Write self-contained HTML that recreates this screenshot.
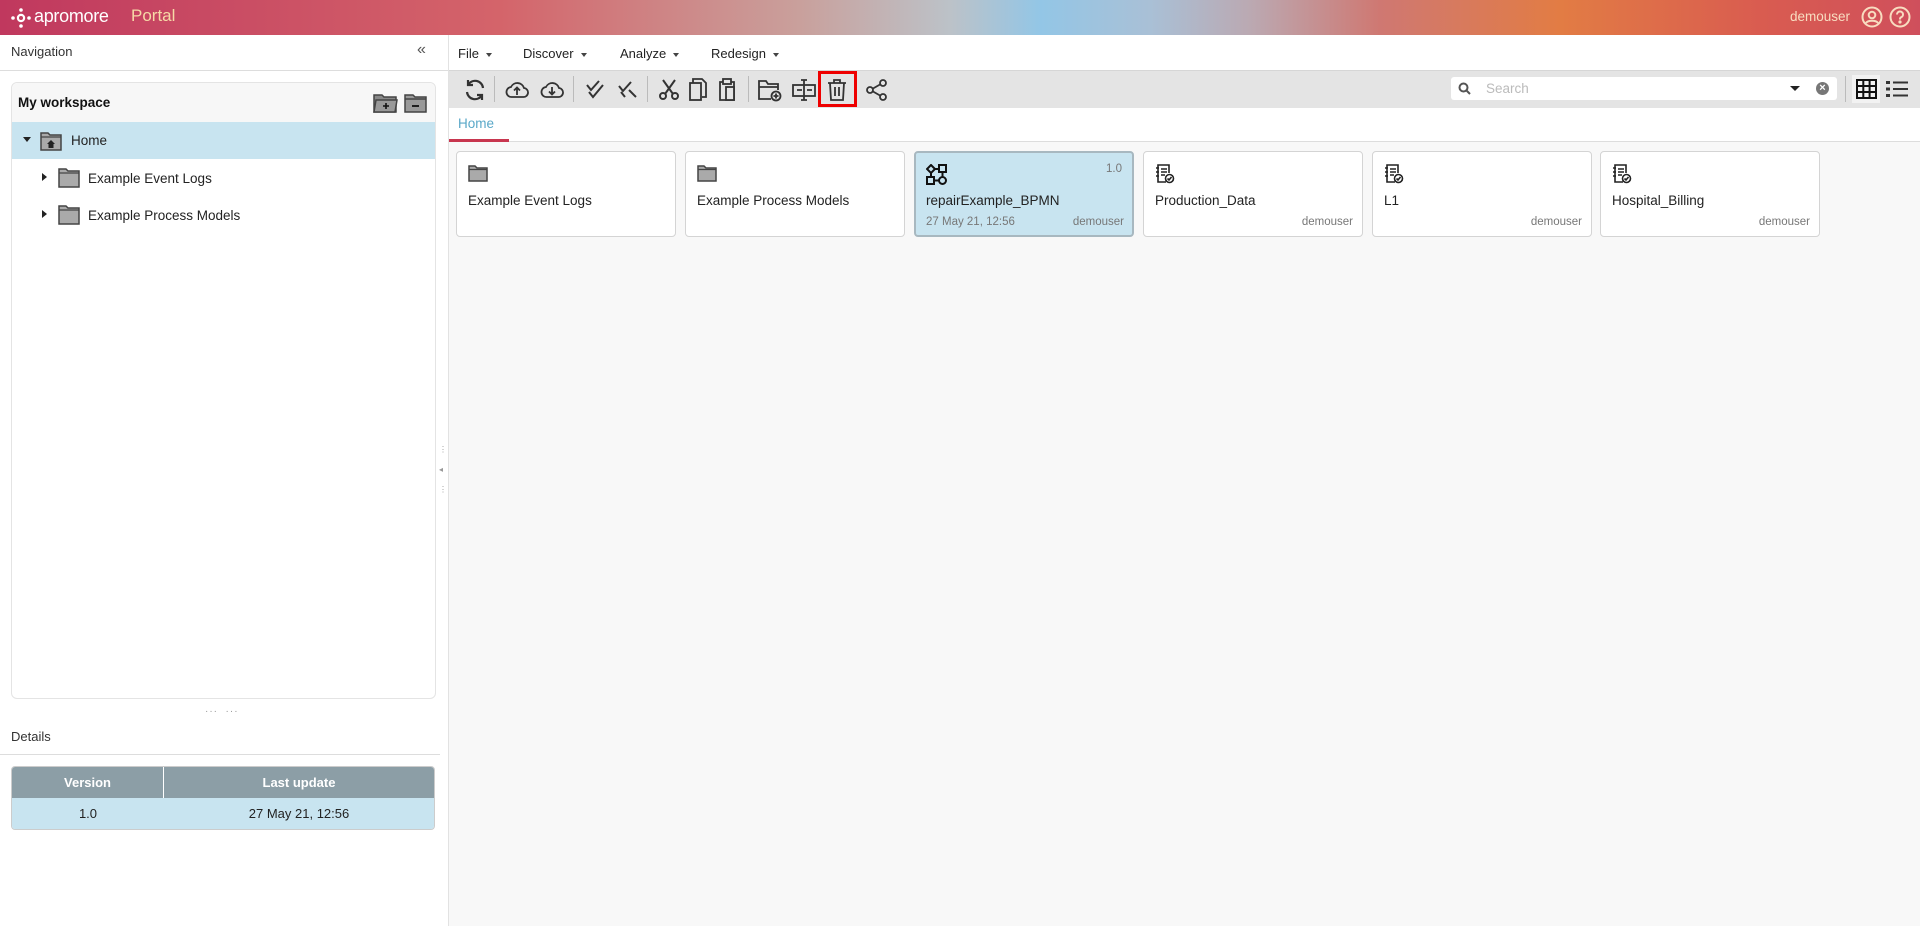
<!DOCTYPE html>
<html><head><meta charset="utf-8"><style>
*{box-sizing:border-box;margin:0;padding:0}
body{width:1920px;height:926px;overflow:hidden;font-family:"Liberation Sans",sans-serif;font-size:13px;color:#222;background:#fff;position:relative}
.abs{position:absolute}
#hdr{left:0;top:0;width:1920px;height:35px;background:linear-gradient(90deg,#c0385e 0,#d4646a 500px,#c9a09c 800px,#bcc2c8 950px,#93c6e6 1040px,#a9c0d6 1150px,#bba9b2 1250px,#cf7872 1380px,#e27c44 1560px,#d95c50 1760px,#cf4f5c 1920px)}
.card{position:absolute;top:151px;width:220px;height:86px;background:#fff;border:1px solid #d4d4d4;border-radius:4px}
.card .t{position:absolute;left:11px;top:41px;font-size:13.5px;color:#222}
.card .u{position:absolute;right:9px;top:64px;font-size:11.5px;color:#777}
.card .ic{position:absolute;left:11px;top:12px}
.tb{position:absolute;top:78px}
.sep{position:absolute;top:76px;width:1px;height:26px;background:#bbb}
.menu{position:absolute;top:46px;font-size:13px;color:#222}
.menu:after{content:"";display:inline-block;margin-left:7px;vertical-align:middle;border:3.5px solid transparent;border-top:4px solid #444;border-bottom:0}
</style></head><body>
<div id="hdr" class="abs"></div>
<svg class="abs" style="left:11px;top:8px" width="20" height="20" viewBox="0 0 20 20"><g fill="#fff"><circle cx="10" cy="10" r="4.2"/><circle cx="10" cy="2" r="1.8"/><circle cx="10" cy="18" r="1.8"/><circle cx="2" cy="10" r="1.8"/><circle cx="18" cy="10" r="1.8"/></g><circle cx="10" cy="10" r="2" fill="#c33d5e"/></svg>
<div class="abs" style="left:34px;top:6px;color:#fff;font-size:18px;letter-spacing:-.3px">apromore</div>
<div class="abs" style="left:131px;top:6px;color:#f6d9a6;font-size:17px">Portal</div>
<div class="abs" style="left:1790px;top:9px;color:#f8dcc0;font-size:13.5px">demouser</div>
<svg class="abs" style="left:1861px;top:6px" width="22" height="22" viewBox="0 0 22 22" fill="none" stroke="#f8dcc0" stroke-width="2"><circle cx="11" cy="11" r="9.5"/><circle cx="11" cy="9" r="3.3"/><path d="M5 17c2-3 10-3 12 0"/></svg>
<svg class="abs" style="left:1889px;top:6px" width="22" height="22" viewBox="0 0 22 22" fill="none" stroke="#f8dcc0" stroke-width="2"><circle cx="11" cy="11" r="9.5"/><path d="M8 8.5a3 3 0 1 1 4 2.8c-1 .4-1 1-1 2.2"/><circle cx="11" cy="16" r=".6" fill="#f8dcc0"/></svg>

<div class="abs" style="left:11px;top:44px;font-size:13px;color:#333">Navigation</div>
<div class="abs" style="left:417px;top:41px;font-size:16px;color:#555">«</div>
<div class="abs" style="left:0;top:70px;width:448px;height:1px;background:#ddd"></div>
<div class="abs" style="left:11px;top:82px;width:425px;height:617px;border:1px solid #e4e4e4;border-radius:6px;background:#fff"></div>
<div class="abs" style="left:12px;top:83px;width:423px;height:39px;background:#f7f7f7;border-radius:6px 6px 0 0"></div>
<div class="abs" style="left:18px;top:95px;font-weight:bold;font-size:13.5px;color:#111">My workspace</div>
<svg class="abs" style="left:373px;top:92px" width="26" height="22" viewBox="0 0 26 22"><path d="M1 3h8l2 2h12v15H1z" fill="#888" stroke="#444" stroke-width="1.5"/><path d="M3 8h21l-2 12H1z" fill="#999" stroke="#444" stroke-width="1.5"/><path d="M13 11v6M10 14h6" stroke="#111" stroke-width="1.6"/></svg>
<svg class="abs" style="left:404px;top:92px" width="23" height="22" viewBox="0 0 23 22"><path d="M1 3h8l2 2h11v15H1z" fill="#999" stroke="#444" stroke-width="1.5"/><path d="M1 7h21" stroke="#444" stroke-width="1.5"/><path d="M8 14h7" stroke="#111" stroke-width="1.8"/></svg>
<div class="abs" style="left:12px;top:122px;width:423px;height:37px;background:#c8e4f0"></div>
<div class="abs" style="left:23px;top:137px;border:4px solid transparent;border-top:5px solid #222;border-bottom:0"></div>
<svg class="abs" style="left:40px;top:131px" width="22" height="20" viewBox="0 0 22 20"><path d="M1 2h7l2 2h11v15H1z" fill="#aaa" stroke="#444" stroke-width="1.5"/><path d="M1 6h20" stroke="#444" stroke-width="1.2"/><path d="M7 13l4-4 4 4h-1.5v4h-5v-4z" fill="#222"/></svg>
<div class="abs" style="left:71px;top:133px;font-size:13.5px;color:#222">Home</div>
<div class="abs" style="left:42px;top:173px;border:4px solid transparent;border-left:5px solid #222;border-right:0"></div>
<svg class="abs" style="left:58px;top:167px" width="22" height="22" viewBox="0 0 22 22"><path d="M1 2h7l2 2h11v16H1z" fill="#aaa" stroke="#444" stroke-width="1.5"/><path d="M1 6h20" stroke="#444" stroke-width="1.2"/></svg>
<div class="abs" style="left:88px;top:171px;font-size:13.5px;color:#222">Example Event Logs</div>
<div class="abs" style="left:42px;top:210px;border:4px solid transparent;border-left:5px solid #222;border-right:0"></div>
<svg class="abs" style="left:58px;top:204px" width="22" height="22" viewBox="0 0 22 22"><path d="M1 2h7l2 2h11v16H1z" fill="#aaa" stroke="#444" stroke-width="1.5"/><path d="M1 6h20" stroke="#444" stroke-width="1.2"/></svg>
<div class="abs" style="left:88px;top:208px;font-size:13.5px;color:#222">Example Process Models</div>
<div class="abs" style="left:205px;top:706px;font-size:10px;color:#999;letter-spacing:1px">···&nbsp;&nbsp;···</div>
<div class="abs" style="left:11px;top:729px;font-size:13px;color:#333">Details</div>
<div class="abs" style="left:0;top:754px;width:440px;height:1px;background:#ddd"></div>
<div class="abs" style="left:11px;top:766px;width:424px;height:64px;border:1px solid #ccc;border-radius:4px;overflow:hidden">
 <div style="height:31px;background:#8c9ea6;color:#fff;font-weight:bold;font-size:13px;display:flex;line-height:31px;text-align:center"><div style="width:152px;border-right:1px solid #fff">Version</div><div style="flex:1">Last update</div></div>
 <div style="height:32px;background:#c8e4f0;display:flex;line-height:32px;text-align:center;font-size:13px"><div style="width:152px">1.0</div><div style="flex:1">27 May 21, 12:56</div></div>
</div>
<div class="abs" style="left:448px;top:35px;width:1px;height:891px;background:#e2e2e2"></div>
<div class="abs" style="left:439px;top:445px;font-size:8px;color:#999;line-height:10px">⋮<br><br>◂<br><br>⋮</div>

<div class="menu" style="left:458px">File</div>
<div class="menu" style="left:523px">Discover</div>
<div class="menu" style="left:620px">Analyze</div>
<div class="menu" style="left:711px">Redesign</div>
<div class="abs" style="left:449px;top:70px;width:1471px;height:38px;background:#e4e4e4;border-top:1px solid #d6d6d6"></div>
<svg class="tb" style="left:463px" width="24" height="24" viewBox="0 0 24 24" fill="none" stroke="#333" stroke-width="2.2"><path d="M20 10A8 8 0 0 0 5 7M4 14a8 8 0 0 0 15 3"/><path d="M5 2v5h5M19 22v-5h-5"/></svg>
<div class="sep" style="left:494px"></div>
<svg class="tb" style="left:505px" width="24" height="24" viewBox="0 0 24 24" fill="none" stroke="#333" stroke-width="1.8"><path d="M7 19a5 5 0 0 1-1-10 7 7 0 0 1 13 1 4.5 4.5 0 0 1-1 9z"/><path d="M12 17v-7M9 12.5l3-3 3 3"/></svg>
<svg class="tb" style="left:540px" width="24" height="24" viewBox="0 0 24 24" fill="none" stroke="#333" stroke-width="1.8"><path d="M7 19a5 5 0 0 1-1-10 7 7 0 0 1 13 1 4.5 4.5 0 0 1-1 9z"/><path d="M12 9v7M9 13.5l3 3 3-3"/></svg>
<div class="sep" style="left:573px"></div>
<svg class="tb" style="left:584px" width="24" height="24" viewBox="0 0 24 24" fill="none" stroke="#333" stroke-width="2"><path d="M3 7l4 5 8-9M5 14l4 5 10-12"/></svg>
<svg class="tb" style="left:616px" width="24" height="24" viewBox="0 0 24 24" fill="none" stroke="#333" stroke-width="2"><path d="M3 8l4 5 8-9M5 14l4 5M13 12l7 7"/></svg>
<div class="sep" style="left:647px"></div>
<svg class="tb" style="left:658px" width="22" height="24" viewBox="0 0 22 24" fill="none" stroke="#333" stroke-width="2"><circle cx="5" cy="18" r="3"/><circle cx="17" cy="18" r="3"/><path d="M7 16L17 2M15 16L5 2"/></svg>
<svg class="tb" style="left:687px" width="22" height="24" viewBox="0 0 22 24" fill="none" stroke="#333" stroke-width="1.8"><path d="M6 5V1h9l4 4v14h-4"/><rect x="3" y="5" width="11" height="17"/></svg>
<svg class="tb" style="left:716px" width="22" height="24" viewBox="0 0 22 24" fill="none" stroke="#333" stroke-width="1.8"><path d="M15 4h3v18H4V4h3"/><rect x="7" y="1" width="8" height="5"/><rect x="10" y="9" width="8" height="13" fill="#e4e4e4"/></svg>
<div class="sep" style="left:748px"></div>
<svg class="tb" style="left:757px" width="26" height="24" viewBox="0 0 26 24" fill="none" stroke="#333" stroke-width="1.8"><path d="M14 21H2V3h7l2 3h10v6"/><path d="M2 9h19"/><circle cx="19" cy="18" r="4.5" fill="#e4e4e4"/><path d="M19 15.5v5M16.5 18h5"/></svg>
<svg class="tb" style="left:791px" width="28" height="24" viewBox="0 0 28 24" fill="none" stroke="#333" stroke-width="1.8"><rect x="2" y="7" width="22" height="11"/><path d="M6 12h5M16 12h5M13 2v20M10 2h6M10 22h6"/></svg>
<div class="abs" style="left:818px;top:71px;width:39px;height:36px;border:3px solid #e00;"></div>
<svg class="tb" style="left:826px" width="22" height="24" viewBox="0 0 22 24" fill="none" stroke="#333" stroke-width="1.8"><path d="M2 5h18M8 5V2h6v3M4 5l1 17h12l1-17M9 9v9M13 9v9"/></svg>
<svg class="tb" style="left:865px" width="24" height="24" viewBox="0 0 24 24" fill="none" stroke="#333" stroke-width="1.8"><circle cx="18" cy="5" r="3"/><circle cx="5" cy="12" r="3"/><circle cx="18" cy="19" r="3"/><path d="M8 10.5l7-4M8 13.5l7 4"/></svg>
<div class="abs" style="left:1451px;top:77px;width:386px;height:23px;background:#fff;border-radius:3px"></div>
<svg class="abs" style="left:1458px;top:82px" width="13" height="13" viewBox="0 0 13 13" fill="none" stroke="#555" stroke-width="2"><circle cx="5.5" cy="5.5" r="4"/><path d="M8.5 8.5l3.5 3.5"/></svg>
<div class="abs" style="left:1486px;top:81px;font-size:13.5px;color:#bbb">Search</div>
<div class="abs" style="left:1790px;top:86px;border:5px solid transparent;border-top:5px solid #222;border-bottom:0"></div>
<div class="abs" style="left:1816px;top:82px;width:13px;height:13px;border-radius:50%;background:#777;color:#fff;font-size:11px;line-height:13px;text-align:center;font-weight:bold">×</div>
<div class="sep" style="left:1845px"></div>
<div class="abs" style="left:1852px;top:75px;width:28px;height:28px;background:#f2f2f2"></div>
<svg class="abs" style="left:1856px;top:79px" width="21" height="20" viewBox="0 0 21 20" fill="none" stroke="#111" stroke-width="2"><rect x="1" y="1" width="19" height="18"/><path d="M7.3 1v18M13.6 1v18M1 7h19M1 13h19"/></svg>
<svg class="abs" style="left:1886px;top:80px" width="22" height="18" viewBox="0 0 22 18" fill="#333"><rect x="0" y="1" width="4" height="3"/><rect x="0" y="7.5" width="4" height="3"/><rect x="0" y="14" width="4" height="3"/><rect x="7" y="1.5" width="15" height="2"/><rect x="7" y="8" width="15" height="2"/><rect x="7" y="14.5" width="15" height="2"/></svg>

<div class="abs" style="left:449px;top:108px;width:1471px;height:818px;background:#f8f8f8"></div>
<div class="abs" style="left:449px;top:108px;width:1471px;height:34px;background:#fff;border-bottom:1px solid #ddd"></div>
<div class="abs" style="left:458px;top:116px;font-size:13.5px;color:#5aa8c8">Home</div>
<div class="abs" style="left:449px;top:139px;width:60px;height:3px;background:#c8364f"></div>

<div class="card" style="left:456px"><svg class="ic" width="20" height="18" viewBox="0 0 20 18"><path d="M1 2h6l2 2h10v13H1z" fill="#aaa" stroke="#444" stroke-width="1.5"/><path d="M1 5.5h18" stroke="#444" stroke-width="1.2"/></svg><div class="t">Example Event Logs</div></div>
<div class="card" style="left:685px"><svg class="ic" width="20" height="18" viewBox="0 0 20 18"><path d="M1 2h6l2 2h10v13H1z" fill="#aaa" stroke="#444" stroke-width="1.5"/><path d="M1 5.5h18" stroke="#444" stroke-width="1.2"/></svg><div class="t">Example Process Models</div></div>
<div class="card" style="left:914px;background:#c8e4f0;border:2px solid #a8b8c0"><svg class="ic" style="left:10px;top:11px" width="22" height="22" viewBox="0 0 22 22" fill="none" stroke="#111" stroke-width="2"><path d="M5 1l4 4-4 4-4-4z"/><rect x="13" y="1" width="7" height="7"/><rect x="1" y="13" width="7" height="7"/><circle cx="16.5" cy="16.5" r="3.5"/><path d="M9 5h4M5 9v4M8 16.5h5M16.5 8v5"/></svg><div class="abs" style="right:10px;top:10px;font-size:11.5px;color:#777">1.0</div><div class="t" style="left:10px;top:40px">repairExample_BPMN</div><div class="abs" style="left:10px;top:63px;font-size:11.5px;color:#777">27 May 21, 12:56</div><div class="u" style="right:8px;top:63px">demouser</div></div>
<div class="card" style="left:1143px"><svg class="ic" width="20" height="20" viewBox="0 0 20 20" fill="none" stroke="#222" stroke-width="1.6"><path d="M11 18H3V1h11v8"/><path d="M1 4h3M1 8h3M1 12h3M6 5h6M6 8h6M6 11h4"/><circle cx="14.5" cy="14.5" r="4"/><path d="M12.5 14.5l1.5 1.5 2.5-3"/></svg><div class="t">Production_Data</div><div class="u">demouser</div></div>
<div class="card" style="left:1372px"><svg class="ic" width="20" height="20" viewBox="0 0 20 20" fill="none" stroke="#222" stroke-width="1.6"><path d="M11 18H3V1h11v8"/><path d="M1 4h3M1 8h3M1 12h3M6 5h6M6 8h6M6 11h4"/><circle cx="14.5" cy="14.5" r="4"/><path d="M12.5 14.5l1.5 1.5 2.5-3"/></svg><div class="t">L1</div><div class="u">demouser</div></div>
<div class="card" style="left:1600px"><svg class="ic" width="20" height="20" viewBox="0 0 20 20" fill="none" stroke="#222" stroke-width="1.6"><path d="M11 18H3V1h11v8"/><path d="M1 4h3M1 8h3M1 12h3M6 5h6M6 8h6M6 11h4"/><circle cx="14.5" cy="14.5" r="4"/><path d="M12.5 14.5l1.5 1.5 2.5-3"/></svg><div class="t">Hospital_Billing</div><div class="u">demouser</div></div>
</body></html>
